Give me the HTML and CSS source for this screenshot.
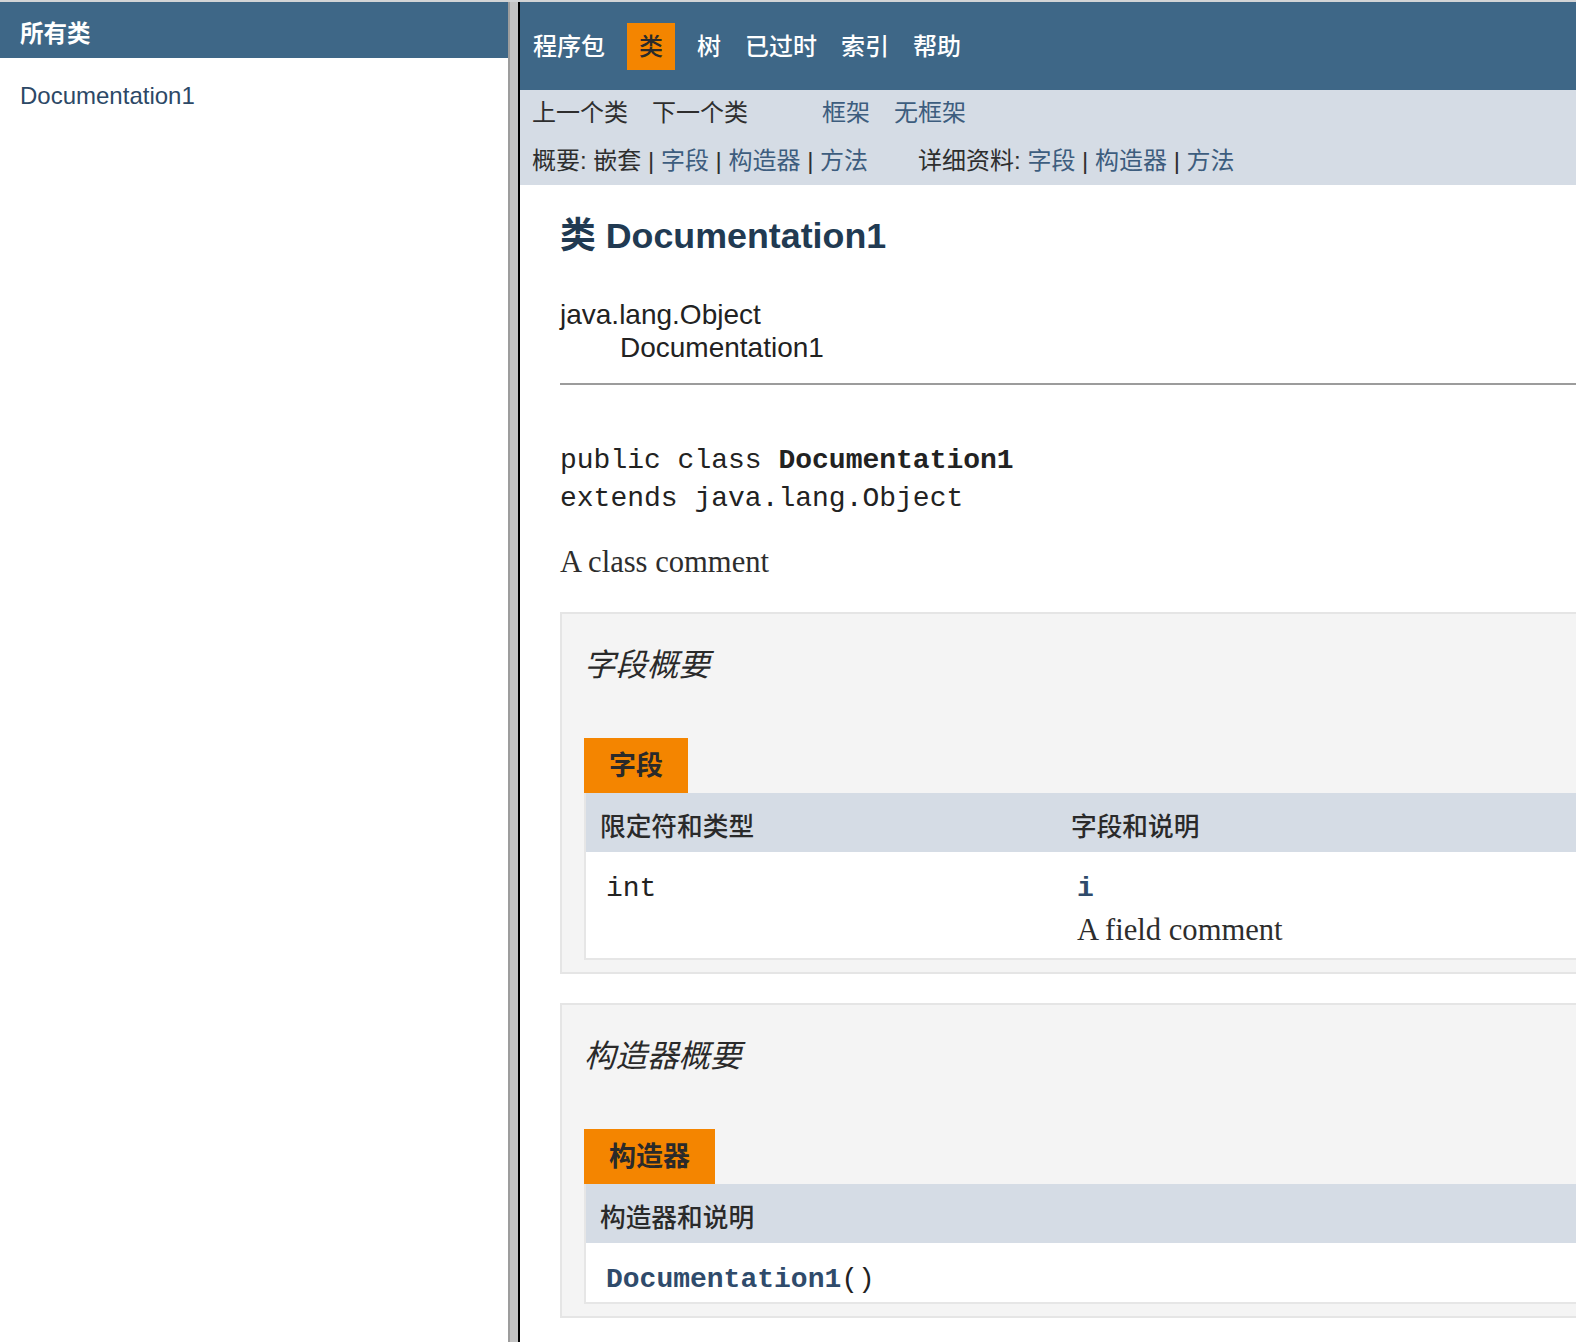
FILE: index.html
```html
<!DOCTYPE html>
<html lang="zh">
<head>
<meta charset="utf-8">
<title>Documentation1</title>
<link rel="stylesheet" href="styles.css">
</head>
<body>
<div class="frames">
  <aside class="left">
    <h1 class="bar">所有类</h1>
    <ul class="classlist">
      <li><a href="#">Documentation1</a></li>
    </ul>
  </aside>
  <div class="splitter"></div>
  <main class="right">
    <nav class="topnav">
      <ul class="navlist">
        <li>程序包</li>
        <li class="active">类</li>
        <li>树</li>
        <li>已过时</li>
        <li>索引</li>
        <li>帮助</li>
      </ul>
    </nav>
    <div class="subnav">
      <div class="subrow first">
        <ul class="sublist">
          <li>上一个类</li>
          <li>下一个类</li>
        </ul>
        <ul class="sublist">
          <li><a href="#">框架</a></li>
          <li><a href="#">无框架</a></li>
        </ul>
      </div>
      <div class="subrow second">
        <ul class="summarylist">
          <li>概要:&nbsp;嵌套&nbsp;|&nbsp;<a href="#">字段</a>&nbsp;|&nbsp;<a href="#">构造器</a>&nbsp;|&nbsp;<a href="#">方法</a></li>
        </ul>
        <ul class="summarylist">
          <li>详细资料:&nbsp;<a href="#">字段</a>&nbsp;|&nbsp;<a href="#">构造器</a>&nbsp;|&nbsp;<a href="#">方法</a></li>
        </ul>
      </div>
    </div>
    <div class="content">
      <h2 class="title">类 Documentation1</h2>
      <ul class="inheritance">
        <li>java.lang.Object</li>
        <li class="child">Documentation1</li>
      </ul>
      <hr class="rule">
      <pre class="decl">public class <b>Documentation1</b>
extends java.lang.Object</pre>
      <div class="block comment">A class comment</div>

      <section class="summary">
        <h3 class="sumtitle">字段概要</h3>
        <div class="tab">字段</div>
        <table class="member">
          <thead>
            <tr><th class="col1">限定符和类型</th><th class="col2">字段和说明</th></tr>
          </thead>
          <tbody>
            <tr>
              <td class="col1"><code>int</code></td>
              <td class="col2"><code class="link"><b>i</b></code>
                <div class="block fieldcomment">A field comment</div></td>
            </tr>
          </tbody>
        </table>
      </section>

      <section class="summary">
        <h3 class="sumtitle">构造器概要</h3>
        <div class="tab">构造器</div>
        <table class="member">
          <thead>
            <tr><th class="colall">构造器和说明</th></tr>
          </thead>
          <tbody>
            <tr>
              <td class="colall ctor"><code><b class="link">Documentation1</b>()</code></td>
            </tr>
          </tbody>
        </table>
      </section>
    </div>
  </main>
</div>
</body>
</html>
```
FILE: styles.css
```css
html, body {
  margin: 0;
  padding: 0;
  height: 100%;
  overflow: hidden;
  background: #ffffff;
}

body {
  font-family: "Liberation Sans", "Noto Sans CJK SC", sans-serif;
  color: #2b2b2b;
}

a {
  text-decoration: none;
}

ul {
  list-style: none;
  margin: 0;
  padding: 0;
}

.frames {
  display: flex;
  height: 1342px;
  border-top: 2px solid #d2d4d6;
  box-sizing: border-box;
}

/* left frame */
.left {
  width: 508px;
  flex: none;
  background: #fff;
}

.bar {
  margin: 0;
  height: 56px;
  box-sizing: border-box;
  padding: 9px 0 0 20px;
  line-height: 47px;
  background: #3e6787;
  color: #ffffff;
  font-size: 23.5px;
  font-weight: bold;
}

.classlist {
  padding: 21px 0 0 20px;
}

.classlist a {
  font-family: "Liberation Sans", "Noto Sans CJK SC", sans-serif;
  font-size: 24px;
  line-height: 34px;
  color: #2c4866;
}

/* splitter */
.splitter {
  flex: none;
  width: 8px;
  background: #c3c3c3;
  border-left: 2px solid #9d9d9d;
  border-right: 2px solid #000;
}

/* right frame */
.right {
  flex: 1;
  min-width: 0;
  overflow: hidden;
}

.topnav {
  height: 88px;
  box-sizing: border-box;
  padding-top: 21px;
  background: #3e6787;
}

.navlist {
  display: flex;
  padding-left: 1px;
}

.navlist li {
  padding: 0 12px;
  line-height: 47px;
  height: 47px;
  font-size: 24px;
  font-weight: 500;
  color: #ffffff;
}

.navlist li.active {
  margin: 0 10px;
  background: #f48500;
  color: #2a2a2a;
}

.subnav {
  background: #d5dce5;
  height: 95px;
  font-size: 24px;
  color: #2e2e2e;
}

.subrow {
  display: flex;
}

.subrow.first {
  height: 46px;
  line-height: 46px;
}

.subrow.second {
  height: 49px;
  line-height: 50px;
}

.sublist {
  display: flex;
  margin-right: 50px;
}

.sublist li {
  padding: 0 12px;
}

.summarylist {
  margin-right: 38px;
}

.summarylist li {
  padding-left: 12px;
}

.subnav a {
  color: #3d5d7e;
}

/* content */
.content {
  width: 1500px;
  padding-left: 40px;
}

.title {
  margin: 29px 0 0;
  font-size: 35.8px;
  line-height: 44px;
  font-weight: bold;
  color: #213a52;
}

.inheritance {
  margin-top: 40px;
  font-size: 28px;
  line-height: 33px;
  color: #222;
}

.inheritance li.child {
  padding-left: 60px;
}

.rule {
  margin: 19px 0 0;
  border: none;
  border-top: 2px solid #9c9c9c;
  height: 0;
}

.decl {
  margin: 57px 0 0;
  font-family: "Liberation Mono", monospace;
  font-size: 28px;
  line-height: 38px;
  color: #222;
}

.block {
  font-family: "Liberation Serif", serif;
  font-size: 30.6px;
  line-height: 36px;
  color: #2d2d2d;
}

.comment {
  margin-top: 26px;
}

.summary {
  margin-top: 32px;
  background: #f4f4f4;
  border: 2px solid #e5e5e5;
  padding: 33px 0 12px 22px;
}

.summary + .summary {
  margin-top: 29px;
}

.sumtitle {
  margin: 0 0 55px;
  font-size: 31.5px;
  line-height: 36px;
  font-style: italic;
  font-weight: normal;
  color: #2a2a2a;
}

.tab {
  display: inline-block;
  vertical-align: top;
  padding: 10px 25px 9px;
  line-height: 36px;
  font-size: 27px;
  font-weight: bold;
  background: #f48500;
  color: #2a2a2a;
}

.member {
  width: 100%;
  border-collapse: collapse;
  border-spacing: 0;
  background: #fff;
  border-left: 2px solid #e6e6e6;
  border-bottom: 2px solid #e6e6e6;
}

.member th {
  text-align: left;
  background: #d5dce5;
  font-size: 25.7px;
  font-weight: 500;
  color: #2a2a2a;
  padding: 17px 0 8px 14px;
  line-height: 34px;
}

.member th.col1 {
  width: 457px;
}

.member td {
  vertical-align: top;
  padding: 18px 0 10px 20px;
}

.member code {
  font-family: "Liberation Mono", monospace;
  font-size: 28px;
  line-height: 38px;
  color: #222;
}

.member .link {
  color: #2f4b6b;
}

.fieldcomment {
  margin-top: 4px;
}

.member td.ctor {
  padding: 18px 0 3px 20px;
}
```
